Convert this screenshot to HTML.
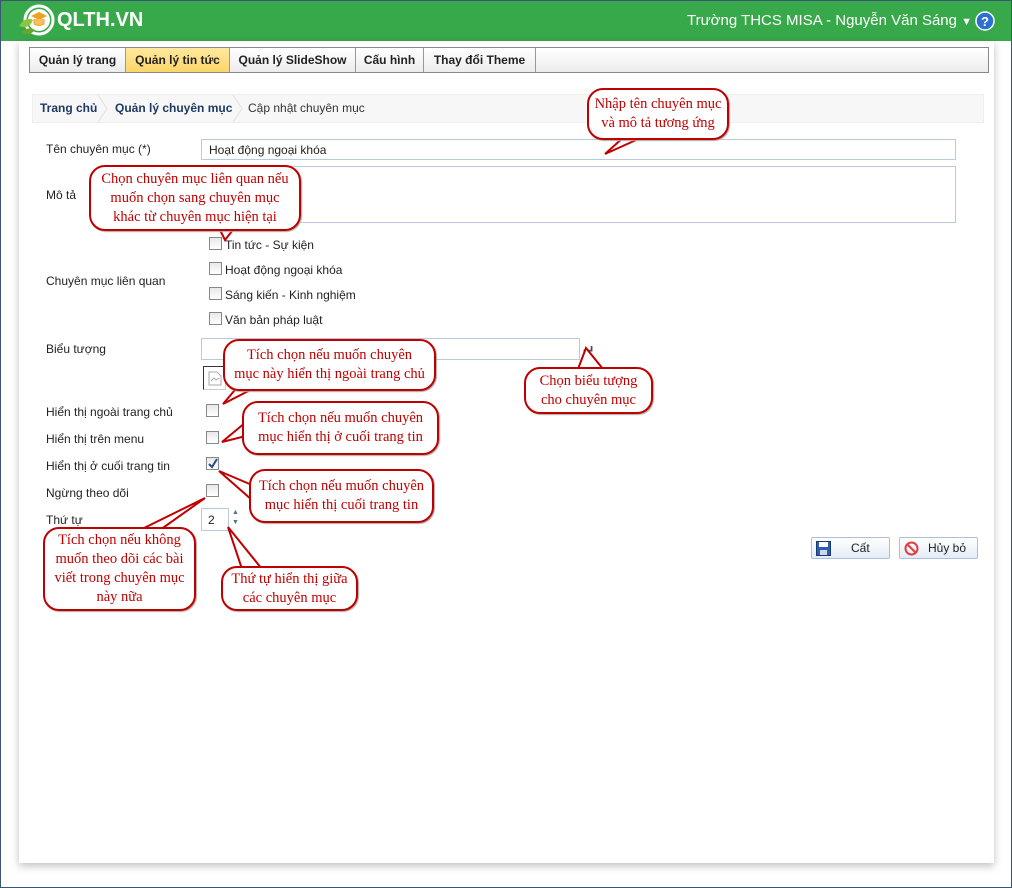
<!DOCTYPE html>
<html><head><meta charset="utf-8">
<style>
*{margin:0;padding:0;box-sizing:border-box}
body{width:1012px;height:888px;position:relative;overflow:hidden;background:#fff;font-family:"Liberation Sans",Arial,sans-serif;font-size:12px;color:#222}
#frame{position:absolute;left:0;top:0;width:1012px;height:888px;border:1px solid #3b5574;pointer-events:none;z-index:9}
.abs{position:absolute}
#hdr{left:0;top:0;width:1012px;height:41px;background:#38a94a}
#panel{left:19px;top:41px;width:975px;height:822px;background:#fff;box-shadow:0 3px 8px rgba(0,0,0,.25)}
.tabs{left:29px;top:47px;width:960px;height:26px;border:1px solid #888;background:linear-gradient(#fff,#ececec);display:flex}
.tab{height:24px;line-height:24px;font-weight:bold;font-size:12px;border-right:1px solid #999;color:#222;text-align:center;white-space:nowrap;overflow:hidden}
.tab.on{background:linear-gradient(#ffe9a0,#fcd568)}
.bc{left:32px;top:94px;width:952px;height:29px;background:#f7f7f7;border:1px solid #eee;line-height:27px;font-size:12px}
.lbl{position:absolute;left:46px;font-size:12px;color:#222}
.inp{position:absolute;border:1px solid #b8cadb;background:#fff}
.cb{position:absolute;width:13px;height:13px;border:1px solid #888;background:linear-gradient(#e8e8e8,#fff)}
.ct{position:absolute;font-size:12px}
.co{position:absolute;border:2px solid #c00000;border-radius:16px;background:#fff;color:#c00000;font-family:"Liberation Serif",serif;font-size:14.5px;text-align:center;line-height:19px;display:flex;align-items:center;justify-content:center;box-shadow:1px 1px 1px #aaa}
.btn{position:absolute;height:22px;border:1px solid #aac0dc;border-radius:2px;background:linear-gradient(#fff,#e4ecf6);font-size:12px;line-height:20px}
</style></head><body>
<div id="frame"></div>
<div id="hdr" class="abs">
 <svg class="abs" style="left:17px;top:2px" width="38" height="36" viewBox="0 0 38 36">
  <circle cx="22" cy="18" r="14" fill="none" stroke="#fff" stroke-width="3"/>
  <circle cx="22" cy="18" r="11" fill="#fff"/>
  <path d="M14 14 L22 10 L30 14 L22 18Z" fill="#f2a020"/><path d="M17 17 v5 q5 3 10 0 v-5" fill="#f5c060" stroke="#f2a020"/>
  <path d="M2 24 q6-10 14-6 q-4 10-14 6Z" fill="#8cc63f"/><path d="M4 30 q8-6 14-2 q-6 7-14 2Z" fill="#6aa52d"/>
 </svg>
 <div class="abs" style="left:57px;top:9px;color:#fff;font-size:20px;font-weight:bold">QLTH.VN</div>
 <div class="abs" style="left:687px;top:12px;color:#fff;font-size:15px">Trường THCS MISA - Nguyễn Văn Sáng <span style="font-size:11px">▼</span></div>
 <svg class="abs" style="left:975px;top:11px" width="20" height="20"><circle cx="10" cy="10" r="9" fill="#2b6fcf" stroke="#fff" stroke-width="1.5"/><text x="10" y="15" font-size="13" font-weight="bold" fill="#fff" text-anchor="middle" font-family="Liberation Sans">?</text></svg>
</div>
<div id="panel" class="abs"></div>
<div class="abs tabs">
 <div class="tab" style="width:96px">Quản lý trang</div><div class="tab on" style="width:104px">Quản lý tin tức</div><div class="tab" style="width:126px">Quản lý SlideShow</div><div class="tab" style="width:68px">Cấu hình</div><div class="tab" style="width:112px">Thay đổi Theme</div>
</div>
<div class="abs bc"><span style="position:absolute;left:7px;color:#1f3a60;font-weight:bold">Trang chủ</span>
<svg style="position:absolute;left:64px;top:0" width="12" height="27"><path d="M1 0 L10 13.5 L1 27" fill="none" stroke="#e2e2e2"/></svg>
<span style="position:absolute;left:82px;color:#1f3a60;font-weight:bold">Quản lý chuyên mục</span>
<svg style="position:absolute;left:199px;top:0" width="12" height="27"><path d="M1 0 L10 13.5 L1 27" fill="none" stroke="#e2e2e2"/></svg>
<span style="position:absolute;left:215px;color:#333">Cập nhật chuyên mục</span></div>

<div class="lbl" style="top:142px">Tên chuyên mục (*)</div>
<div class="inp" style="left:201px;top:139px;width:755px;height:21px;padding:3px 7px;font-size:12px">Hoạt động ngoại khóa</div>
<div class="lbl" style="top:188px">Mô tả</div>
<div class="inp" style="left:201px;top:166px;width:755px;height:57px"></div>

<div class="cb" style="left:209px;top:237px"></div><div class="ct" style="left:225px;top:238px">Tin tức - Sự kiện</div>
<div class="cb" style="left:209px;top:262px"></div><div class="ct" style="left:225px;top:263px">Hoạt động ngoại khóa</div>
<div class="cb" style="left:209px;top:287px"></div><div class="ct" style="left:225px;top:288px">Sáng kiến - Kinh nghiệm</div>
<div class="cb" style="left:209px;top:312px"></div><div class="ct" style="left:225px;top:313px">Văn bản pháp luật</div>
<div class="lbl" style="top:274px">Chuyên mục liên quan</div>

<div class="lbl" style="top:342px">Biểu tượng</div>
<div class="inp" style="left:201px;top:338px;width:379px;height:22px"></div>
<div class="abs" style="left:583px;top:342px;color:#3a5070;font-size:14px;font-weight:bold">↵</div>
<div class="abs" style="left:203px;top:366px;width:23px;height:24px;border:1px solid #333;border-right-color:#ccc;border-bottom-color:#ccc"><svg style="position:absolute;left:4px;top:4px" width="14" height="15"><path d="M1 1 h8 l4 4 v9 h-12z" fill="#fff" stroke="#aaa"/><path d="M3 10 l3-3 l2 2 l3-2" fill="none" stroke="#aaa"/></svg></div>

<div class="lbl" style="top:405px">Hiển thị ngoài trang chủ</div><div class="cb" style="left:206px;top:404px"></div>
<div class="lbl" style="top:432px">Hiển thị trên menu</div><div class="cb" style="left:206px;top:431px"></div>
<div class="lbl" style="top:459px">Hiển thị ở cuối trang tin</div><div class="cb" style="left:206px;top:457px"><svg width="11" height="11" style="position:absolute;left:0;top:0"><path d="M2 6 L5 9 L10 1" stroke="#2a4a8a" stroke-width="2" fill="none"/></svg></div>
<div class="lbl" style="top:486px">Ngừng theo dõi</div><div class="cb" style="left:206px;top:484px"></div>
<div class="lbl" style="top:513px">Thứ tự</div>
<div class="inp" style="left:201px;top:508px;width:28px;height:23px;padding:4px 6px;font-size:12px">2</div>
<div class="abs" style="left:232px;top:508px;font-size:7px;color:#5a6e88;line-height:10px">▲<br>▼</div>

<div class="btn" style="left:811px;top:537px;width:79px"><svg style="position:absolute;left:4px;top:3px" width="15" height="15"><rect x="0.5" y="0.5" width="14" height="14" fill="#2c5fb0" stroke="#1a3a70"/><rect x="3" y="1" width="9" height="5" fill="#fff"/><rect x="4" y="9" width="7" height="5" fill="#cdd8ea"/></svg><span style="position:absolute;left:39px">Cất</span></div>
<div class="btn" style="left:899px;top:537px;width:79px"><svg style="position:absolute;left:4px;top:3px" width="15" height="15"><circle cx="7.5" cy="7.5" r="6" fill="none" stroke="#e04040" stroke-width="2"/><path d="M3.5 3.5 L11.5 11.5" stroke="#e04040" stroke-width="2"/></svg><span style="position:absolute;left:28px">Hủy bỏ</span></div>

<svg class="abs" style="left:0;top:0" width="1012" height="888">
 <g fill="#fff" stroke="#c00000" stroke-width="2" stroke-linejoin="miter">
  <polygon points="625,136 605,154 645,136"/>
  <polygon points="218,226 225,240 236,226"/>
  <polygon points="240,384 223,404 262,384"/>
  <polygon points="578,369 586,348 603,369"/>
  <polygon points="246,422 222,442 246,436"/>
  <polygon points="252,485 219,471 252,500"/>
  <polygon points="140,530 205,498 160,530"/>
  <polygon points="262,569 228,527 242,569"/>
 </g>
</svg>
<div class="co" style="left:587px;top:88px;width:142px;height:52px">Nhập tên chuyên mục<br>và mô tả tương ứng</div>
<div class="co" style="left:89px;top:165px;width:212px;height:66px">Chọn chuyên mục liên quan nếu<br>muốn chọn sang chuyên mục<br>khác từ chuyên mục hiện tại</div>
<div class="co" style="left:223px;top:339px;width:213px;height:52px">Tích chọn nếu muốn chuyên<br>mục này hiển thị ngoài trang chủ</div>
<div class="co" style="left:524px;top:367px;width:129px;height:47px">Chọn biểu tượng<br>cho chuyên mục</div>
<div class="co" style="left:242px;top:401px;width:197px;height:54px">Tích chọn nếu muốn chuyên<br>mục hiển thị ở cuối trang tin</div>
<div class="co" style="left:249px;top:469px;width:185px;height:54px">Tích chọn nếu muốn chuyên<br>mục hiển thị cuối trang tin</div>
<div class="co" style="left:43px;top:527px;width:153px;height:84px">Tích chọn nếu không<br>muốn theo dõi các bài<br>viết trong chuyên mục<br>này nữa</div>
<div class="co" style="left:221px;top:566px;width:137px;height:45px">Thứ tự hiển thị giữa<br>các chuyên mục</div>
</body></html>
